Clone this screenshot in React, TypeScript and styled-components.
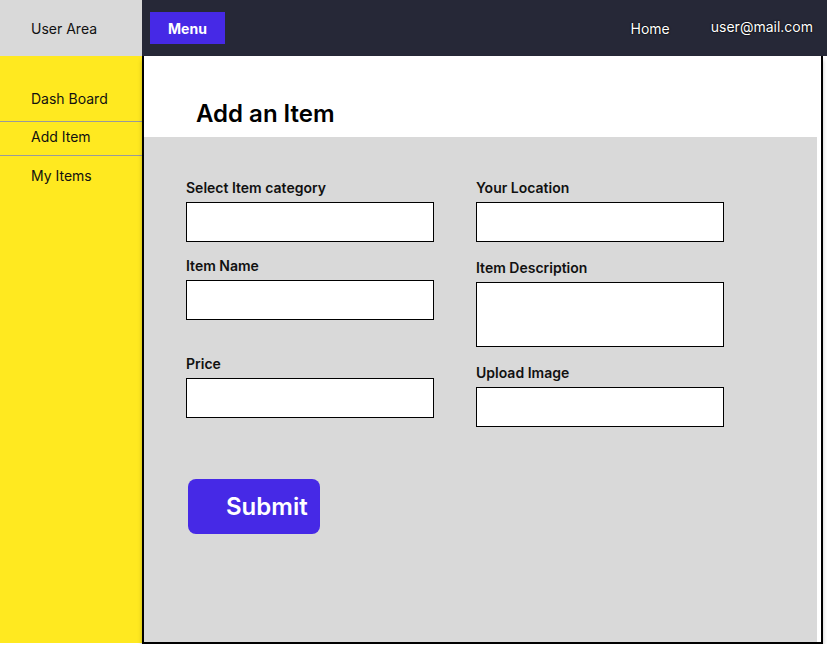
import React from "react";
import styled, { createGlobalStyle } from "styled-components";

const GlobalStyle = createGlobalStyle`
    html, body {
        margin:0;
        padding:0;
        background:white;
        font-family:Inter, "Noto Sans", sans-serif;
    }
    *{
        box-sizing:border-box;
    }
`;

const Page = styled.div`
    display:grid;
    grid-template-columns:142px 681px;
    grid-template-rows:56px 588px;
    width:827px;
`;

const UserArea = styled.div`
    background:#d9d9d9;
    color:#111;
    font-size:14px;
    display:flex;
    align-items:center;
    padding-left:31px;
`;

const TopBar = styled.div`
    background:#262837;
    display:flex;
    align-items:center;
    padding:0 14px 0 8px;
    margin-right:-4px;
`;

const MenuBtn = styled.button`
    background:#4629e6;
    color:white;
    border:none;
    width:75px;
    height:32px;
    font-family:Inter, sans-serif;
    font-weight:700;
    font-size:14px;
    padding:0;
`;

const TopLinks = styled.div`
    margin-left:auto;
    display:flex;
    align-items:center;
    gap:41px;
`;

const TopLink = styled.span<{ $up?: boolean }>`
    color:white;
    font-size:14px;
    text-shadow:0 0 2px #000, 0 0 1px #000;
    position:relative;
    top:${p => p.$up ? "-2px" : "0"};
`;

const Sidebar = styled.nav`
    background:#ffe920;
    padding-top:34px;
    height:587px;
`;

const NavItem = styled.div<{ $pad: string; $line?: boolean }>`
    font-size:14px;
    line-height:17px;
    color:#111;
    padding:${p => p.$pad};
    padding-left:31px;
    border-bottom:${p => p.$line ? "1px solid #9a9a9a" : "none"};
`;

const Main = styled.main`
    border:2px solid #000;
    border-top:none;
    background:white;
    display:flex;
    flex-direction:column;
    box-shadow:0 4px 4px rgba(0,0,0,0.25);
`;

const Header = styled.div`
    height:81px;
    padding:43px 0 0 52px;
`;

const Title = styled.h1`
    margin:0;
    font-size:24px;
    line-height:29px;
    font-weight:600;
    color:#000;
`;

const FormArea = styled.div`
    flex:1;
    background:#d9d9d9;
    margin-right:4px;
    padding:42px 0 0 42px;
`;

const Columns = styled.div`
    display:flex;
    gap:42px;
`;

const Column = styled.div`
    display:flex;
    flex-direction:column;
    width:248px;
`;

const Field = styled.div<{ $top: number }>`
    display:flex;
    flex-direction:column;
    gap:6px;
    margin-top:${p => p.$top}px;
`;

const Label = styled.label`
    font-size:14px;
    line-height:17px;
    font-weight:600;
    color:#111;
`;

const Box = styled.div<{ $h: number }>`
    height:${p => p.$h}px;
    background:white;
    border:1px solid #000;
`;

const SubmitBtn = styled.button`
    margin:52px 0 0 2px;
    width:132px;
    height:55px;
    border:none;
    border-radius:8px;
    background:#4629e6;
    color:white;
    font-family:Inter, sans-serif;
    font-size:24px;
    font-weight:600;
    text-align:left;
    padding:0 0 0 38px;
`;

function App(){
    return <>
        <GlobalStyle/>
        <Page>
            <UserArea>User Area</UserArea>
            <TopBar>
                <MenuBtn>Menu</MenuBtn>
                <TopLinks>
                    <TopLink>Home</TopLink>
                    <TopLink $up>user@mail.com</TopLink>
                </TopLinks>
            </TopBar>
            <Sidebar>
                <NavItem $pad="0 0 14px" $line>Dash Board</NavItem>
                <NavItem $pad="6px 0 10px" $line>Add Item</NavItem>
                <NavItem $pad="11px 0 0">My Items</NavItem>
            </Sidebar>
            <Main>
                <Header>
                    <Title>Add an Item</Title>
                </Header>
                <FormArea>
                    <Columns>
                        <Column>
                            <Field $top={0}>
                                <Label>Select Item category</Label>
                                <Box $h={40}/>
                            </Field>
                            <Field $top={15}>
                                <Label>Item Name</Label>
                                <Box $h={40}/>
                            </Field>
                            <Field $top={35}>
                                <Label>Price</Label>
                                <Box $h={40}/>
                            </Field>
                        </Column>
                        <Column>
                            <Field $top={0}>
                                <Label>Your Location</Label>
                                <Box $h={40}/>
                            </Field>
                            <Field $top={17}>
                                <Label>Item Description</Label>
                                <Box $h={65}/>
                            </Field>
                            <Field $top={17}>
                                <Label>Upload Image</Label>
                                <Box $h={40}/>
                            </Field>
                        </Column>
                    </Columns>
                    <SubmitBtn>Submit</SubmitBtn>
                </FormArea>
            </Main>
        </Page>
    </>
}

export default App;
